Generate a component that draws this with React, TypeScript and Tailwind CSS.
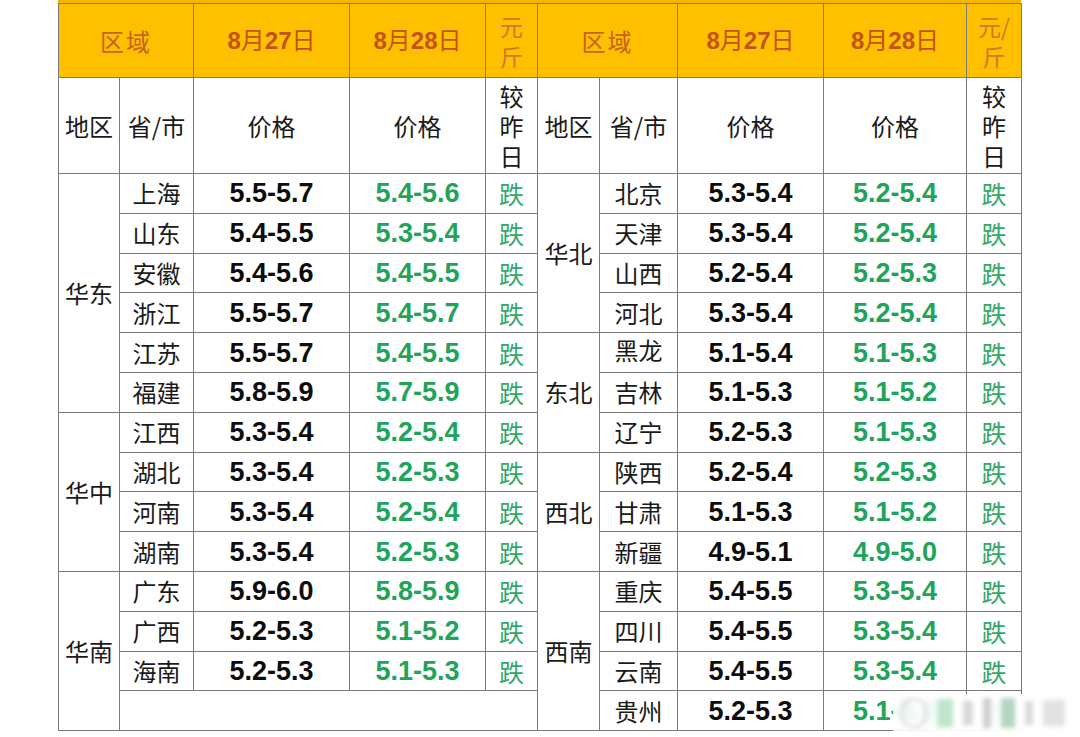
import React from 'react'

const cjk = '"Noto Sans CJK SC", "Liberation Sans", sans-serif'
const num = '"Liberation Sans", Arial, "Noto Sans CJK SC", sans-serif'

type Row = { prov: string; p1: string; p2: string }

const left: { region: string; rows: Row[]; blank?: boolean }[] = [
  {
    region: '华东',
    rows: [
      { prov: '上海', p1: '5.5-5.7', p2: '5.4-5.6' },
      { prov: '山东', p1: '5.4-5.5', p2: '5.3-5.4' },
      { prov: '安徽', p1: '5.4-5.6', p2: '5.4-5.5' },
      { prov: '浙江', p1: '5.5-5.7', p2: '5.4-5.7' },
      { prov: '江苏', p1: '5.5-5.7', p2: '5.4-5.5' },
      { prov: '福建', p1: '5.8-5.9', p2: '5.7-5.9' }
    ]
  },
  {
    region: '华中',
    rows: [
      { prov: '江西', p1: '5.3-5.4', p2: '5.2-5.4' },
      { prov: '湖北', p1: '5.3-5.4', p2: '5.2-5.3' },
      { prov: '河南', p1: '5.3-5.4', p2: '5.2-5.4' },
      { prov: '湖南', p1: '5.3-5.4', p2: '5.2-5.3' }
    ]
  },
  {
    region: '华南',
    blank: true,
    rows: [
      { prov: '广东', p1: '5.9-6.0', p2: '5.8-5.9' },
      { prov: '广西', p1: '5.2-5.3', p2: '5.1-5.2' },
      { prov: '海南', p1: '5.2-5.3', p2: '5.1-5.3' }
    ]
  }
]

const right: { region: string; rows: Row[] }[] = [
  {
    region: '华北',
    rows: [
      { prov: '北京', p1: '5.3-5.4', p2: '5.2-5.4' },
      { prov: '天津', p1: '5.3-5.4', p2: '5.2-5.4' },
      { prov: '山西', p1: '5.2-5.4', p2: '5.2-5.3' },
      { prov: '河北', p1: '5.3-5.4', p2: '5.2-5.4' }
    ]
  },
  {
    region: '东北',
    rows: [
      { prov: '黑龙', p1: '5.1-5.4', p2: '5.1-5.3' },
      { prov: '吉林', p1: '5.1-5.3', p2: '5.1-5.2' },
      { prov: '辽宁', p1: '5.2-5.3', p2: '5.1-5.3' }
    ]
  },
  {
    region: '西北',
    rows: [
      { prov: '陕西', p1: '5.2-5.4', p2: '5.2-5.3' },
      { prov: '甘肃', p1: '5.1-5.3', p2: '5.1-5.2' },
      { prov: '新疆', p1: '4.9-5.1', p2: '4.9-5.0' }
    ]
  },
  {
    region: '西南',
    rows: [
      { prov: '重庆', p1: '5.4-5.5', p2: '5.3-5.4' },
      { prov: '四川', p1: '5.4-5.5', p2: '5.3-5.4' },
      { prov: '云南', p1: '5.4-5.5', p2: '5.3-5.4' },
      { prov: '贵州', p1: '5.2-5.3', p2: '5.1-5.2' }
    ]
  }
]

// flatten both halves into 14 aligned rows
type Cell = { region?: string; span?: number; row?: Row; blank?: boolean }

const flatten = (groups: { region: string; rows: Row[]; blank?: boolean }[]) => {
  const out: Cell[] = []
  groups.forEach(g => {
    const span = g.rows.length + (g.blank ? 1 : 0)
    g.rows.forEach((r, i) => out.push({ region: i === 0 ? g.region : undefined, span, row: r }))
    if (g.blank) out.push({ blank: true })
  })
  return out
}

const L = flatten(left)
const R = flatten(right)

const td = 'border border-[#7a7a7a] text-center align-middle p-0 leading-[28px]'

const Half = ({ c }: { c: Cell }) => (
  <>
    {c.region && (
      <td rowSpan={c.span} className={`${td} text-[24px] text-[#1a1a1a]`} style={{ fontFamily: cjk }}>
        {c.region}
      </td>
    )}
    {c.blank ? (
      <td colSpan={4} className={td}></td>
    ) : (
      <>
        <td className={`${td} text-[24px] text-[#1a1a1a]`} style={{ fontFamily: cjk }}>
          {c.row!.prov === '黑龙' ? (
            <div className="h-[38px] overflow-hidden pt-[2px]">黑龙</div>
          ) : (
            c.row!.prov
          )}
        </td>
        <td className={`${td} text-[27px] font-bold text-[#0d0d0d]`} style={{ fontFamily: num }}>
          {c.row!.p1}
        </td>
        <td className={`${td} text-[27px] font-bold text-[#22a35a]`} style={{ fontFamily: num }}>
          {c.row!.p2}
        </td>
        <td className={`${td} text-[25px] text-[#35a868]`} style={{ fontFamily: cjk }}>
          跌
        </td>
      </>
    )}
  </>
)

const HeadTop = ({ unit }: { unit: string }) => (
  <>
    <th colSpan={2} className={`${td} font-normal text-[24px] tracking-[2px] text-[#c8631c]`} style={{ fontFamily: cjk }}>
      区域
    </th>
    <th className={`${td} font-normal text-[24px] text-[#c4521a]`} style={{ fontFamily: num }}>
      <b>8</b>月<b>27</b>日
    </th>
    <th className={`${td} font-normal text-[24px] text-[#c4521a]`} style={{ fontFamily: num }}>
      <b>8</b>月<b>28</b>日
    </th>
    <th className={`${td} font-normal text-[23px] !leading-[30px] text-[#d0782c]`} style={{ fontFamily: cjk }}>
      {unit}
      <br />斤
    </th>
  </>
)

const HeadSub = () => (
  <>
    <td className={`${td} text-[24px] text-[#1a1a1a]`} style={{ fontFamily: cjk }}>地区</td>
    <td className={`${td} text-[24px] text-[#1a1a1a]`} style={{ fontFamily: cjk }}>省/市</td>
    <td className={`${td} text-[24px] text-[#1a1a1a]`} style={{ fontFamily: cjk }}>价格</td>
    <td className={`${td} text-[24px] text-[#1a1a1a]`} style={{ fontFamily: cjk }}>价格</td>
    <td className={`${td} text-[24px] !leading-[30px] text-[#1a1a1a]`} style={{ fontFamily: cjk }}>
      较<br />昨<br />日
    </td>
  </>
)

export default function App() {
  return (
    <div className="relative w-[1080px] h-[737px] overflow-hidden bg-white">
      <div className="ml-[58px] w-[963px] h-[3px] bg-[#f3b700]" />
      <table className="ml-[58px] w-[963px] table-fixed border-collapse border border-[#9a9a9a]">
        <colgroup>
          <col className="w-[61px]" />
          <col className="w-[74px]" />
          <col className="w-[156px]" />
          <col className="w-[136px]" />
          <col className="w-[52px]" />
          <col className="w-[62px]" />
          <col className="w-[78px]" />
          <col className="w-[146px]" />
          <col className="w-[143px]" />
          <col className="w-[55px]" />
        </colgroup>
        <thead>
          <tr className="h-[74px] bg-[#ffc000]">
            <HeadTop unit="元" />
            <HeadTop unit="元/" />
          </tr>
        </thead>
        <tbody>
          <tr className="h-[96px]">
            <HeadSub />
            <HeadSub />
          </tr>
          {L.map((c, i) => (
            <tr key={i} className="h-[39.8px]">
              <Half c={c} />
              <Half c={R[i]} />
            </tr>
          ))}
        </tbody>
      </table>

      {/* blurred watermark */}
      <div className="absolute left-[893px] top-[694px] w-[187px] h-[38px] bg-gradient-to-r from-white/80 via-white/90 to-white/95 backdrop-blur-[4px]">
        <div className="flex h-full items-center gap-[10px] pl-[8px] blur-[2px]">
          <span className="h-[30px] w-[26px] rounded-full border-2 border-[#d4d4d4]" />
          <span className="h-[28px] w-[16px] bg-[#bfe6cc]" />
          <span className="h-[24px] w-[10px] bg-[#d8d8d8]" />
          <span className="h-[30px] w-[8px] bg-[#cfcfcf]" />
          <span className="h-[30px] w-[14px] bg-[#b4d6c0]" />
          <span className="h-[24px] w-[8px] bg-[#dadada]" />
          <span className="h-[26px] w-[22px] bg-[#e2e2e2]" />
        </div>
      </div>
    </div>
  )
}
